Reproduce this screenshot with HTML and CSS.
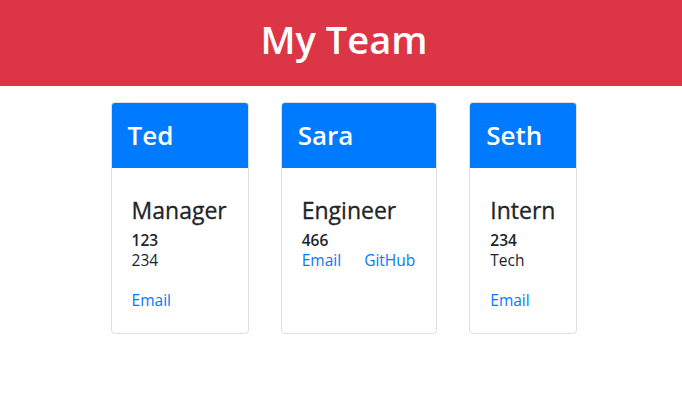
FILE: index.html
```html
<!DOCTYPE html>
<html lang="en">
<head>
<meta charset="utf-8">
<title>My Team</title>
<link rel="stylesheet" href="styles.css">
</head>
<body>
<header class="banner">
  <h1 class="banner-title">My Team</h1>
</header>
<main class="team">
  <section class="card">
    <div class="card-header"><h2 class="name">Ted</h2></div>
    <div class="card-body">
      <h3 class="role">Manager</h3>
      <div class="line strong">123</div>
      <div class="line">234</div>
      <div class="line spacer"></div>
      <div class="line"><a class="link" href="#">Email</a></div>
    </div>
  </section>
  <section class="card">
    <div class="card-header"><h2 class="name">Sara</h2></div>
    <div class="card-body">
      <h3 class="role">Engineer</h3>
      <div class="line strong">466</div>
      <div class="line links"><a class="link" href="#">Email</a><a class="link" href="#">GitHub</a></div>
    </div>
  </section>
  <section class="card">
    <div class="card-header"><h2 class="name">Seth</h2></div>
    <div class="card-body">
      <h3 class="role">Intern</h3>
      <div class="line strong">234</div>
      <div class="line">Tech</div>
      <div class="line spacer"></div>
      <div class="line"><a class="link" href="#">Email</a></div>
    </div>
  </section>
</main>
</body>
</html>
```
FILE: styles.css
```css
* { box-sizing: border-box; }
html, body { margin: 0; padding: 0; }
body {
  font-family: "Open Sans", "Noto Sans", sans-serif;
  color: #212529;
  background: #fff;
  width: 682px;
  height: 416px;
  overflow: hidden;
}
.banner {
  background: #dc3545;
  height: 86px;
  display: flex;
  align-items: center;
  justify-content: center;
  padding: 0 0 6px 6px;
}
.banner-title {
  margin: 0;
  color: #fff;
  font-size: 38px;
  font-weight: 600;
  line-height: 1.2;
}
.team {
  display: flex;
  justify-content: center;
  align-items: stretch;
  gap: 32px;
  padding: 16px 0 0 6px;
}
.card {
  border: 1px solid rgba(0,0,0,.125);
  border-radius: 4px;
  overflow: hidden;
  display: flex;
  flex-direction: column;
  height: 232px;
}
.card-header {
  background: #007bff;
  height: 65px;
  padding: 0 16px;
  display: flex;
  align-items: center;
}
.name {
  margin: 0;
  color: #fff;
  font-size: 26px;
  font-weight: 600;
  line-height: 1.2;
}
.card-body {
  padding: 28px 21px 20px 20px;
}
.role {
  margin: 0 0 5px;
  font-size: 23px;
  font-weight: 500;
  line-height: 29px;
  -webkit-text-stroke: 0.3px #212529;
}
.line {
  font-size: 15.5px;
  line-height: 20px;
  height: 20px;
}
.strong { font-weight: 600; }
.spacer { height: 20px; }
.links { display: flex; gap: 23px; }
.link { color: #007bff; text-decoration: none; }
```
